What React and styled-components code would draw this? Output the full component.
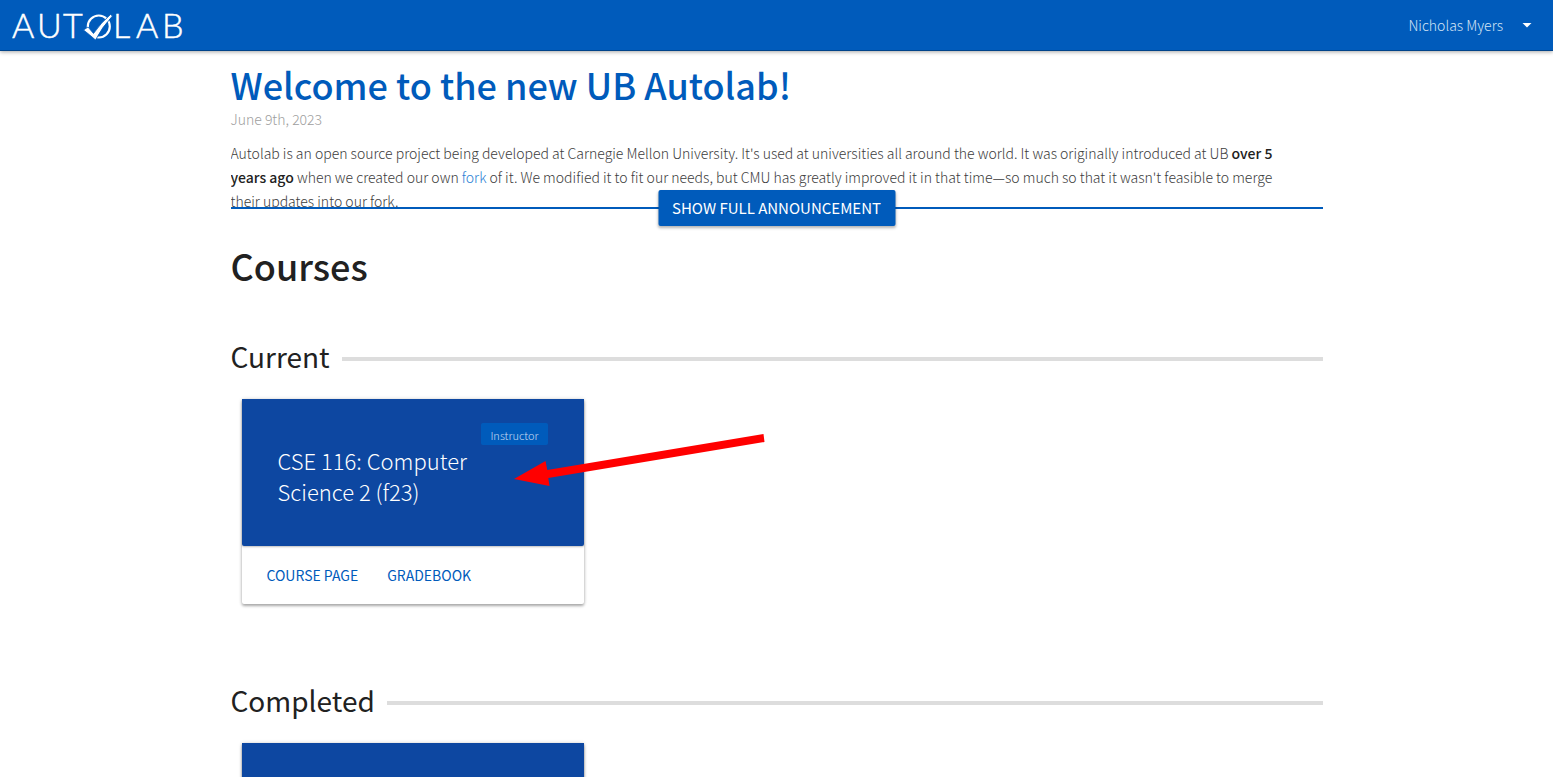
import React from "react";
import styled, { createGlobalStyle } from "styled-components";

const GlobalStyle = createGlobalStyle`
  *, *::before, *::after { box-sizing: border-box; }
  html { scrollbar-width: none; }
  body {
    margin: 0;
    background: #fff;
    color: #212121;
    font-family: "Noto Sans CJK SC", "Noto Sans", sans-serif;
    font-size: 14px;
    font-weight: 300;
    line-height: 24px;
  }
  a { color: inherit; text-decoration: none; }
`;

const NavBar = styled.header`
  display: flex;
  align-items: center;
  justify-content: space-between;
  height: 51px;
  padding: 0 20px 0 12px;
  background: #005bbb;
  color: #fff;
  border-bottom: 1px solid #00438a;
  box-shadow: 0 1px 4px rgba(0, 0, 0, 0.35);
`;

const LogoLink = styled.a`
  display: flex;
`;

const UserMenu = styled.button`
  display: flex;
  align-items: center;
  gap: 18px;
  padding: 0;
  border: 0;
  background: none;
  color: #d3e4f5;
  font: inherit;
  cursor: pointer;
`;

const Container = styled.main`
  width: calc(100% - 48px);
  max-width: 1092px;
  margin: 0 auto;
`;

const Announcement = styled.section`
  position: relative;
  padding-top: 9px;
  border-bottom: 2px solid #005bbb;
`;

const Title = styled.h1`
  margin: 0;
  font-size: 36px;
  line-height: 48px;
  font-weight: 500;
  color: ${(p) => (p.$accent ? "#005bbb" : "#212121")};
`;

const PostDate = styled.div`
  line-height: 22px;
  color: #9e9e9e;
`;

const Clip = styled.div`
  height: 77px;
  padding: 11px 28px 0 0;
  overflow: hidden;
  color: #3c3c3c;

  p { margin: 0; }
  a { color: #2a7fd4; }
  strong { font-weight: 500; color: #212121; }
`;

const ExpandButton = styled.button`
  position: absolute;
  left: 50%;
  bottom: -19px;
  transform: translateX(-50%);
  height: 36px;
  padding: 0 14px;
  border: 0;
  border-radius: 2px;
  background: #005bbb;
  color: #fff;
  font: inherit;
  font-size: 15px;
  font-weight: 400;
  white-space: nowrap;
  box-shadow: 0 2px 3px rgba(0, 0, 0, 0.3);
  cursor: pointer;
`;

const Courses = styled.section`
  padding-top: 32px;
`;

const Group = styled.section`
  padding-top: ${(p) => (p.$first ? 47 : 76)}px;
`;

const GroupTitle = styled.h2`
  display: flex;
  align-items: center;
  gap: 12px;
  margin: 0 0 23px;
  font-size: 28px;
  line-height: 40px;
  font-weight: 400;

  &::after {
    content: "";
    flex: 1;
    height: 4px;
    margin-top: 6px;
    background: #ddd;
  }
`;

const CardGrid = styled.div`
  display: grid;
  grid-template-columns: repeat(3, 1fr);
  gap: 22px;
  padding: 0 11px;
`;

const Card = styled.article`
  position: relative;
  background: #fff;
  border-radius: 2px;
  box-shadow: 0 2px 3px rgba(0, 0, 0, 0.3), 0 0 4px rgba(0, 0, 0, 0.14);
`;

const CardHead = styled.div`
  display: flex;
  flex-direction: column;
  min-height: 147px;
  padding: 24px 36px;
  border-radius: 0 0 2px 2px;
  background: #0d47a1;
  color: #fff;
  box-shadow: 0 1px 2px rgba(0, 0, 0, 0.25);
`;

const Badge = styled.span`
  align-self: flex-end;
  padding: 2px 9px 0;
  border-radius: 2px;
  background: #005bbb;
  color: #c8dcf2;
  font-size: 11px;
  line-height: 20px;
`;

const CourseName = styled.h3`
  width: 75%;
  margin: 0;
  font-size: 22px;
  line-height: 31px;
  font-weight: 300;
`;

const CardActions = styled.div`
  display: flex;
  gap: 29px;
  padding: 17px 25px;

  a {
    color: #005bbb;
    font-weight: 400;
  }
`;

const Pointer = styled.svg`
  position: absolute;
  left: 272px;
  top: 32px;
  pointer-events: none;
`;

function Logo() {
  return (
    <svg width="180" height="42" viewBox="12 4 180 42" fill="#fff" role="img" aria-label="Autolab">
      <g fontFamily="Lato, sans-serif" fontSize="34" fontWeight="300" stroke="#fff" strokeWidth="0.500">
        <text x="12 37 63" y="38">AUT</text>
        <text x="113 136 162" y="38">LAB</text>
      </g>
      <circle cx="98.800" cy="26.500" r="11" fill="none" stroke="#fff" strokeWidth="2.200" />
      <path d="M83.500 30 L88 27 L93.500 33.500 Q101 22.500 110.500 14.500 L112.500 16 Q102 27 95.500 40 Q90 35 83.500 30 Z" stroke="#005bbb" strokeWidth="0.800" />
    </svg>
  );
}

function CourseCard({ name, role, links, pointer }) {
  return (
    <Card>
      <CardHead>
        {role && <Badge>{role}</Badge>}
        {name && <CourseName>{name}</CourseName>}
      </CardHead>
      {links && (
        <CardActions>
          {links.map((link) => (
            <a key={link.href} href={link.href}>{link.label}</a>
          ))}
        </CardActions>
      )}
      {pointer && (
        <Pointer width="252" height="58" viewBox="0 0 252 58" fill="#f00" aria-hidden="true">
          <path d="M0 48 L31.500 30 L33.300 39 L249.500 3 L250.500 11 L34.300 47 L35.500 55 Z" />
        </Pointer>
      )}
    </Card>
  );
}

const courseLinks = [
  { href: "#course", label: "COURSE PAGE" },
  { href: "#gradebook", label: "GRADEBOOK" },
];

export default function App() {
  return (
    <>
      <GlobalStyle />
      <NavBar>
        <LogoLink href="#home"><Logo /></LogoLink>
        <UserMenu type="button">
          Nicholas Myers
          <svg width="12" height="6" viewBox="0 0 12 6" fill="#fff" aria-hidden="true">
            <path d="M1.500 1 H10.500 L6 5.500 Z" />
          </svg>
        </UserMenu>
      </NavBar>
      <Container>
        <Announcement>
          <Title $accent>Welcome to the new UB Autolab!</Title>
          <PostDate>June 9th, 2023</PostDate>
          <Clip>
            <p>
              Autolab is an open source project being developed at Carnegie Mellon University. It's used at
              universities all around the world. It was originally introduced at UB <strong>over 5 years ago</strong>{" "}
              when we created our own <a href="#fork">fork</a> of it. We modified it to fit our needs, but CMU has
              greatly improved it in that time—so much so that it wasn't feasible to merge their updates into our
              fork.
            </p>
          </Clip>
          <ExpandButton type="button">SHOW FULL ANNOUNCEMENT</ExpandButton>
        </Announcement>
        <Courses>
          <Title>Courses</Title>
          <Group $first>
            <GroupTitle>Current</GroupTitle>
            <CardGrid>
              <CourseCard
                name="CSE 116: Computer Science 2 (f23)"
                role="Instructor"
                links={courseLinks}
                pointer
              />
            </CardGrid>
          </Group>
          <Group>
            <GroupTitle>Completed</GroupTitle>
            <CardGrid>
              <CourseCard />
            </CardGrid>
          </Group>
        </Courses>
      </Container>
    </>
  );
}
